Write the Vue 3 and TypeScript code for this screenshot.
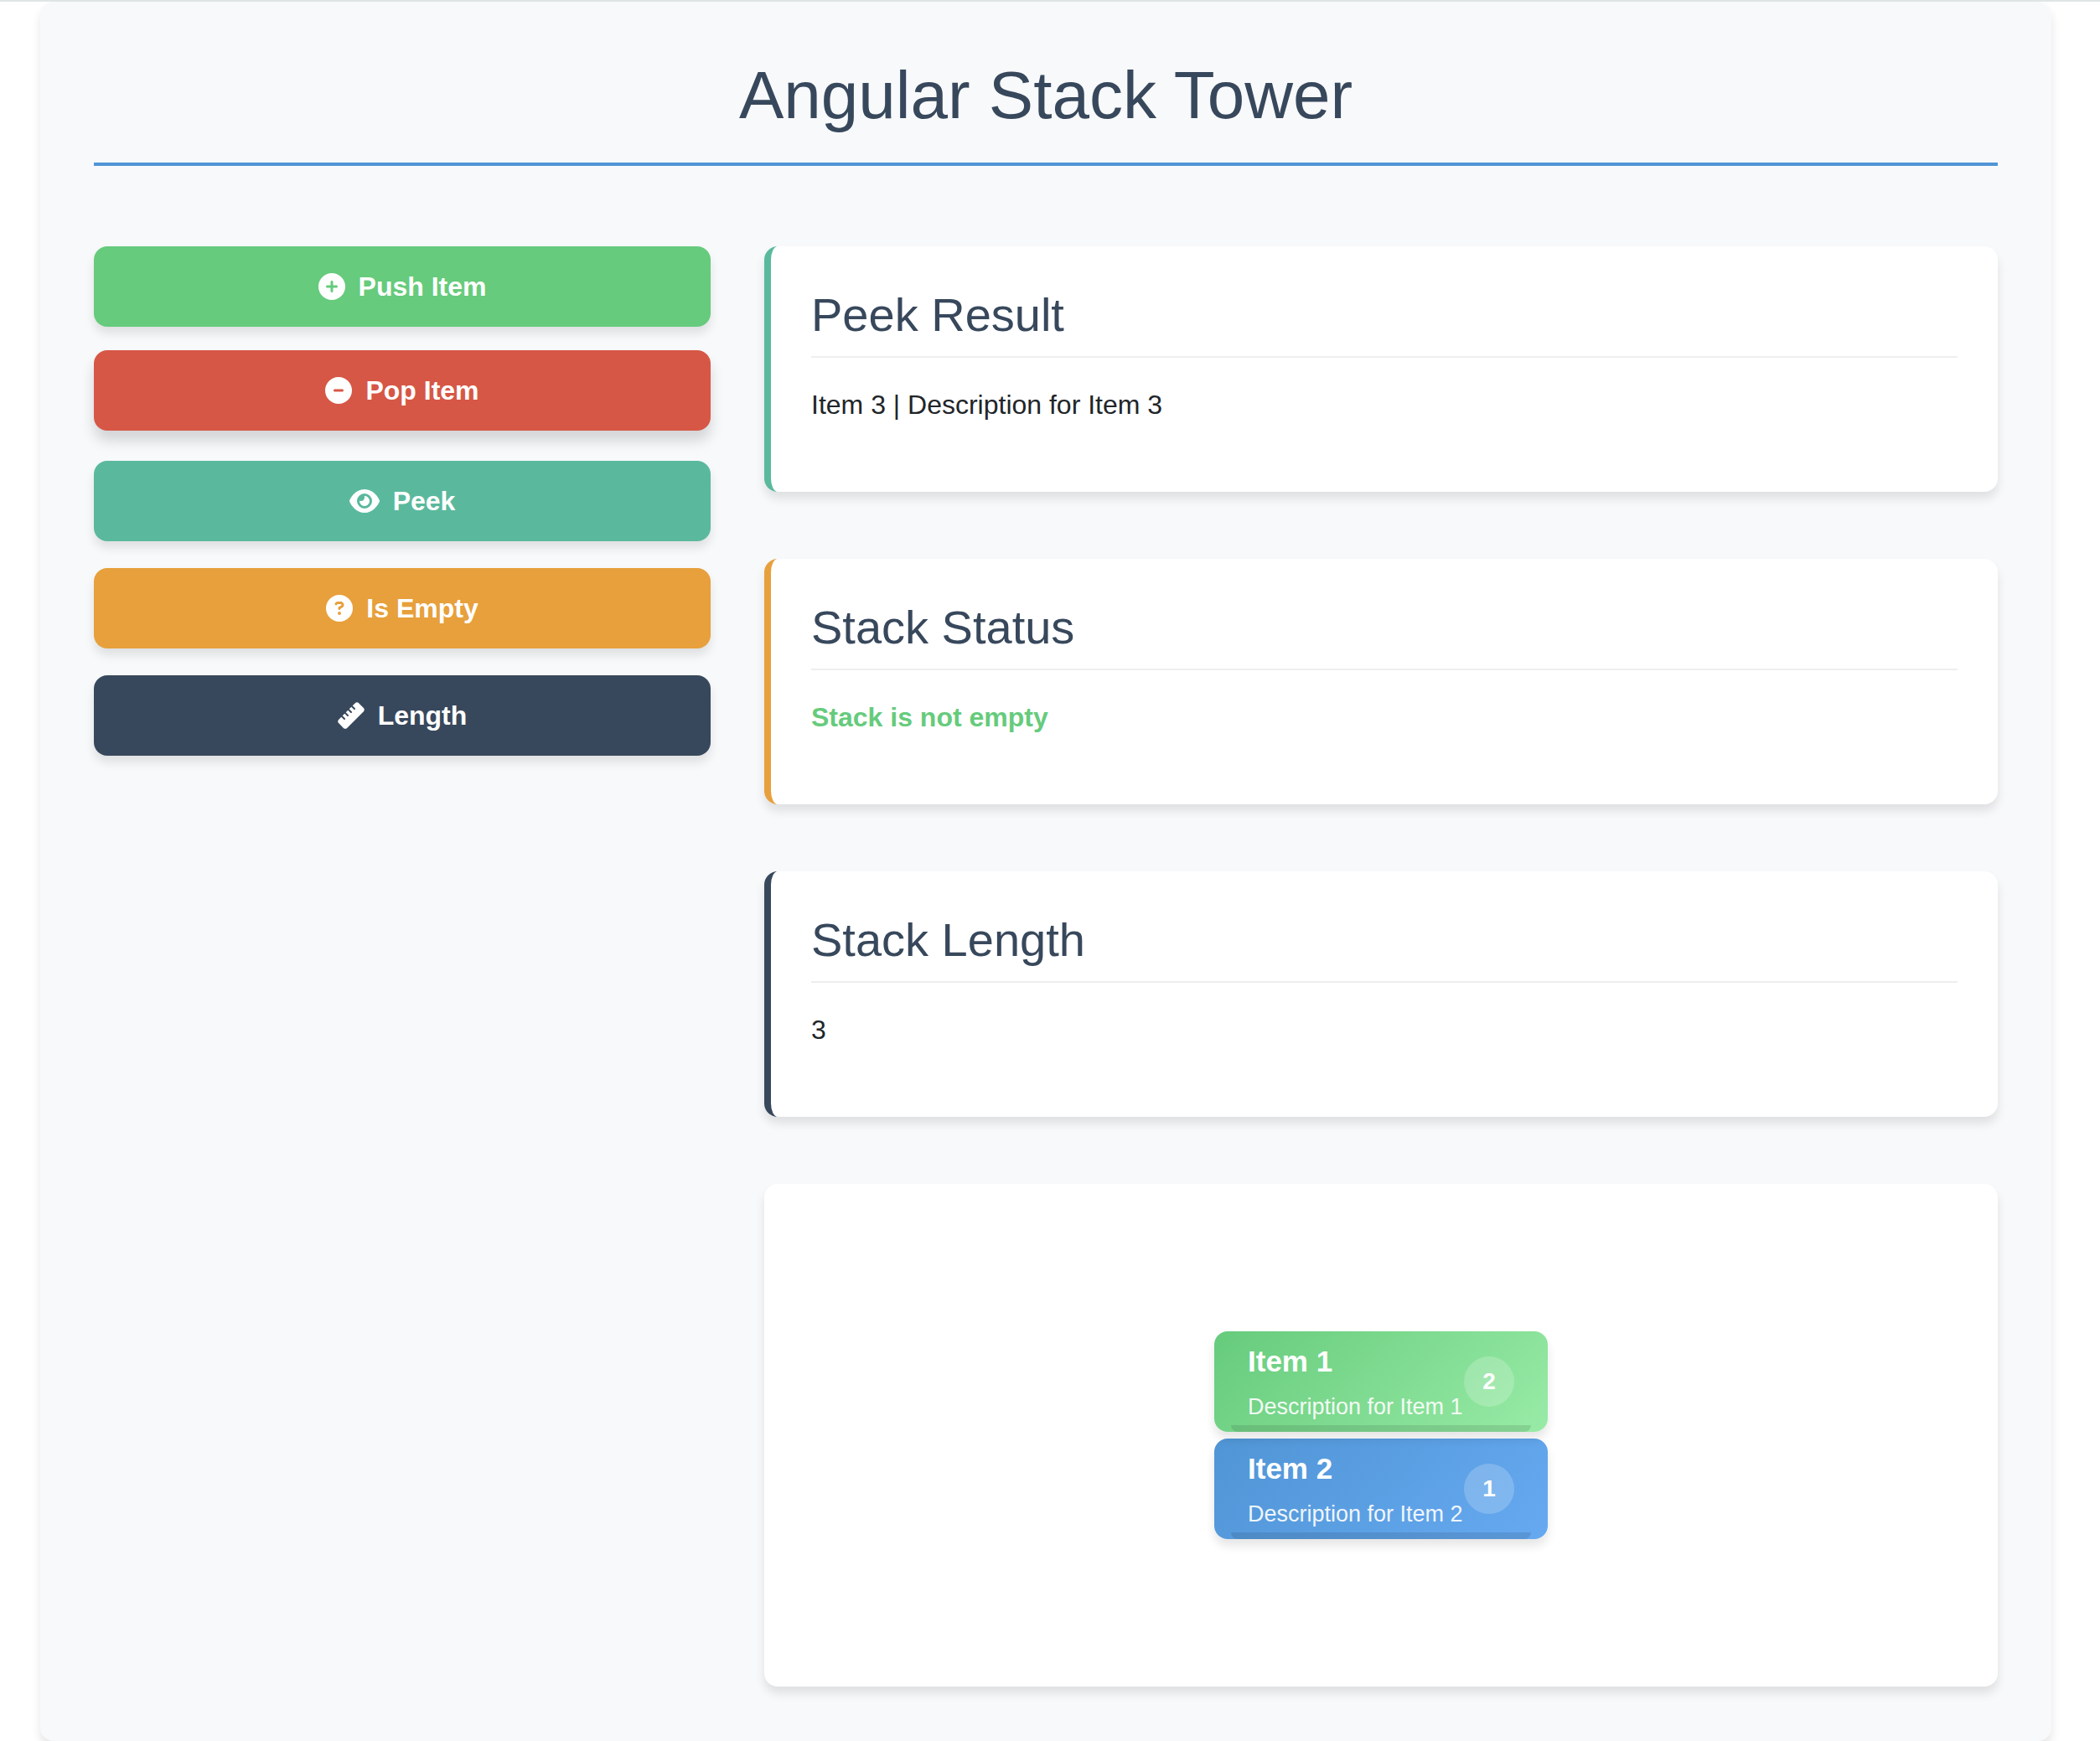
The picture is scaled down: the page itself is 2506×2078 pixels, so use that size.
<script setup lang="ts">
interface Action {
  label: string
  tone: string
  viewBox: string
  path: string
  raised?: boolean
}

interface StackItem {
  name: string
  description: string
  position: number
  tone: string
}

const disc = 'M256 512A256 256 0 1 0 256 0a256 256 0 1 0 0 512z'

const actions: Action[] = [
  {
    label: 'Push Item',
    tone: 'push',
    viewBox: '0 0 512 512',
    path: disc + 'M232 344V280H168c-13.3 0-24-10.7-24-24s10.7-24 24-24h64V168c0-13.3 10.7-24 24-24s24 10.7 24 24v64h64c13.3 0 24 10.7 24 24s-10.7 24-24 24H280v64c0 13.3-10.7 24-24 24s-24-10.7-24-24z',
  },
  {
    label: 'Pop Item',
    tone: 'pop',
    viewBox: '0 0 512 512',
    path: disc + 'M184 232H328c13.3 0 24 10.7 24 24s-10.7 24-24 24H184c-13.3 0-24-10.7-24-24s10.7-24 24-24z',
    raised: true,
  },
  {
    label: 'Peek',
    tone: 'peek',
    viewBox: '0 0 576 512',
    path: 'M288 32c-80.8 0-145.5 36.8-192.6 80.6C48.6 156 17.3 208 2.5 243.7c-3.3 7.9-3.3 16.7 0 24.6C17.3 304 48.6 356 95.4 399.4C142.5 443.2 207.2 480 288 480s145.5-36.8 192.6-80.6c46.8-43.5 78.1-95.4 93-131.1c3.3-7.9 3.3-16.7 0-24.6c-14.9-35.7-46.2-87.7-93-131.1C433.5 68.8 368.8 32 288 32zM144 256a144 144 0 1 1 288 0 144 144 0 1 1 -288 0zm144-64c0 35.3-28.7 64-64 64c-7.1 0-13.9-1.2-20.3-3.3c-5.5-1.8-11.9 1.6-11.7 7.4c.3 6.9 1.3 13.8 3.2 20.7c13.7 51.2 66.4 81.6 117.6 67.9s81.6-66.4 67.9-117.6c-11.1-41.5-47.8-69.4-88.6-71.1c-5.8-.2-9.2 6.1-7.4 11.7c2.1 6.4 3.3 13.2 3.3 20.3z',
  },
  {
    label: 'Is Empty',
    tone: 'empty',
    viewBox: '0 0 512 512',
    path: disc + 'M169.8 165.3c7.9-22.3 29.1-37.3 52.8-37.3h58.3c34.9 0 63.1 28.3 63.1 63.1c0 22.6-12.1 43.5-31.7 54.8L280 264.4c-.2 13-10.9 23.6-24 23.6c-13.3 0-24-10.7-24-24V250.5c0-8.6 4.6-16.5 12.1-20.8l44.3-25.4c4.7-2.7 7.6-7.7 7.6-13.1c0-8.4-6.8-15.1-15.1-15.1H222.6c-3.4 0-6.4 2.1-7.5 5.3l-.4 1.2c-4.4 12.5-18.2 19-30.6 14.6s-19-18.2-14.6-30.6l.4-1.2zM224 352a32 32 0 1 1 64 0 32 32 0 1 1 -64 0z',
  },
  {
    label: 'Length',
    tone: 'length',
    viewBox: '0 0 512 512',
    path: 'M177.9 494.1c-18.7 18.7-49.1 18.7-67.9 0L17.9 401.9c-18.7-18.7-18.7-49.1 0-67.9l50.7-50.7 48 48c6.2 6.2 16.4 6.2 22.6 0s6.2-16.4 0-22.6l-48-48 41.4-41.4 48 48c6.2 6.2 16.4 6.2 22.6 0s6.2-16.4 0-22.6l-48-48 41.4-41.4 48 48c6.2 6.2 16.4 6.2 22.6 0s6.2-16.4 0-22.6l-48-48 41.4-41.4 48 48c6.2 6.2 16.4 6.2 22.6 0s6.2-16.4 0-22.6l-48-48 50.7-50.7c18.7-18.7 49.1-18.7 67.9 0l92.1 92.1c18.7 18.7 18.7 49.1 0 67.9L177.9 494.1z',
  },
]

const items: StackItem[] = [
  { name: 'Item 1', description: 'Description for Item 1', position: 2, tone: 'green' },
  { name: 'Item 2', description: 'Description for Item 2', position: 1, tone: 'blue' },
]
</script>

<template>
  <div class="page">
    <main class="container">
      <h1 class="title">Angular Stack Tower</h1>
      <div class="layout">
        <div class="actions">
          <button
            v-for="action in actions"
            :key="action.label"
            type="button"
            class="action"
            :class="[action.tone, { raised: action.raised }]"
          >
            <svg class="icon" :viewBox="action.viewBox" aria-hidden="true">
              <path fill="currentColor" :d="action.path" />
            </svg>
            <span>{{ action.label }}</span>
          </button>
        </div>

        <div class="results">
          <section class="card peek-card">
            <h2>Peek Result</h2>
            <p>Item 3 | Description for Item 3</p>
          </section>
          <section class="card status-card">
            <h2>Stack Status</h2>
            <p class="not-empty">Stack is not empty</p>
          </section>
          <section class="card length-card">
            <h2>Stack Length</h2>
            <p>3</p>
          </section>
          <section class="tower">
            <article
              v-for="item in items"
              :key="item.name"
              class="block"
              :class="item.tone"
              :style="{ zIndex: item.position }"
            >
              <div class="block-text">
                <h3>{{ item.name }}</h3>
                <p>{{ item.description }}</p>
              </div>
              <span class="badge">{{ item.position }}</span>
            </article>
          </section>
        </div>
      </div>
    </main>
  </div>
</template>

<style>
body {
  margin: 0;
  background: #fff;
}
</style>

<style scoped>
.page {
  box-sizing: border-box;
  display: flex;
  min-height: 100vh;
  padding: 0 58px 0 48px;
  border-top: 2px solid #dee6e5;
  color: #212529;
  font-family: "Liberation Sans", Helvetica, Arial, sans-serif;
  font-size: 32px;
  line-height: 48px;
}

.container {
  box-sizing: border-box;
  flex: 1;
  min-width: 0;
  padding: 64px;
  border-radius: 16px;
  background: #f8f9fb;
  box-shadow: 0 8px 12px rgba(0, 0, 0, 0.1);
}

h1,
h2,
h3,
p {
  margin: 0;
}

.title {
  padding-bottom: 32px;
  margin-bottom: 96px;
  border-bottom: 4px solid #5095d5;
  color: #38485c;
  font-size: 80px;
  font-weight: 400;
  line-height: 96px;
  text-align: center;
}

.layout {
  display: grid;
  grid-template-columns: 1fr 2fr;
  gap: 64px;
}

.actions {
  display: flex;
  flex-direction: column;
  gap: 32px;
}

.action {
  display: flex;
  align-items: center;
  justify-content: center;
  gap: 16px;
  padding: 24px 32px;
  border: 0;
  border-radius: 16px;
  color: #fff;
  font: inherit;
  font-weight: 700;
  box-shadow: 0 8px 12px rgba(0, 0, 0, 0.1);
  cursor: pointer;
}

.raised {
  box-shadow: 0 12px 16px rgba(0, 0, 0, 0.15);
  transform: translateY(-4px);
}

.push {
  background: #66cb7c;
}

.pop {
  background: #d65745;
}

.peek {
  background: #5ab99d;
}

.empty {
  background: #e7a03c;
}

.length {
  background: #38485c;
}

.icon {
  height: 32px;
}

.results {
  display: flex;
  flex-direction: column;
  gap: 80px;
}

.card,
.tower {
  border-radius: 16px;
  background: #fff;
  box-shadow: 0 8px 12px rgba(0, 0, 0, 0.1);
}

.card {
  padding: 48px 48px 80px;
  border-left: 8px solid;
}

.peek-card {
  border-color: #5ab99d;
}

.status-card {
  border-color: #e7a03c;
}

.length-card {
  border-color: #38485c;
}

.card h2 {
  padding-bottom: 16px;
  margin-bottom: 32px;
  border-bottom: 2px solid #eee;
  color: #38485c;
  font-size: 56px;
  font-weight: 400;
  line-height: 67px;
}

.not-empty {
  color: #66cb7c;
  font-weight: 700;
}

.tower {
  display: flex;
  flex-direction: column;
  align-items: center;
  justify-content: center;
  gap: 8px;
  min-height: 600px;
}

.block {
  position: relative;
  box-sizing: border-box;
  display: flex;
  align-items: center;
  justify-content: space-between;
  width: 398px;
  height: 120px;
  padding: 0 40px;
  border-radius: 16px;
  color: #fff;
  box-shadow: 0 8px 12px rgba(0, 0, 0, 0.1);
}

.block::after {
  content: "";
  position: absolute;
  right: 20px;
  bottom: 0;
  left: 20px;
  height: 8px;
  border-radius: 0 0 8px 8px;
  background: rgba(0, 0, 0, 0.1);
}

.green {
  background: linear-gradient(135deg, #66cb7c, #98eba6);
}

.blue {
  background: linear-gradient(135deg, #5095d5, #66a9f1);
}

.block h3 {
  margin-bottom: 8px;
  font-size: 35px;
  font-weight: 700;
  line-height: 52px;
}

.block p {
  font-size: 27px;
  line-height: 40px;
  white-space: nowrap;
  opacity: 0.9;
}

.badge {
  flex: none;
  width: 60px;
  border-radius: 50%;
  background: rgba(255, 255, 255, 0.2);
  font-size: 28px;
  font-weight: 700;
  line-height: 60px;
  text-align: center;
}
</style>
